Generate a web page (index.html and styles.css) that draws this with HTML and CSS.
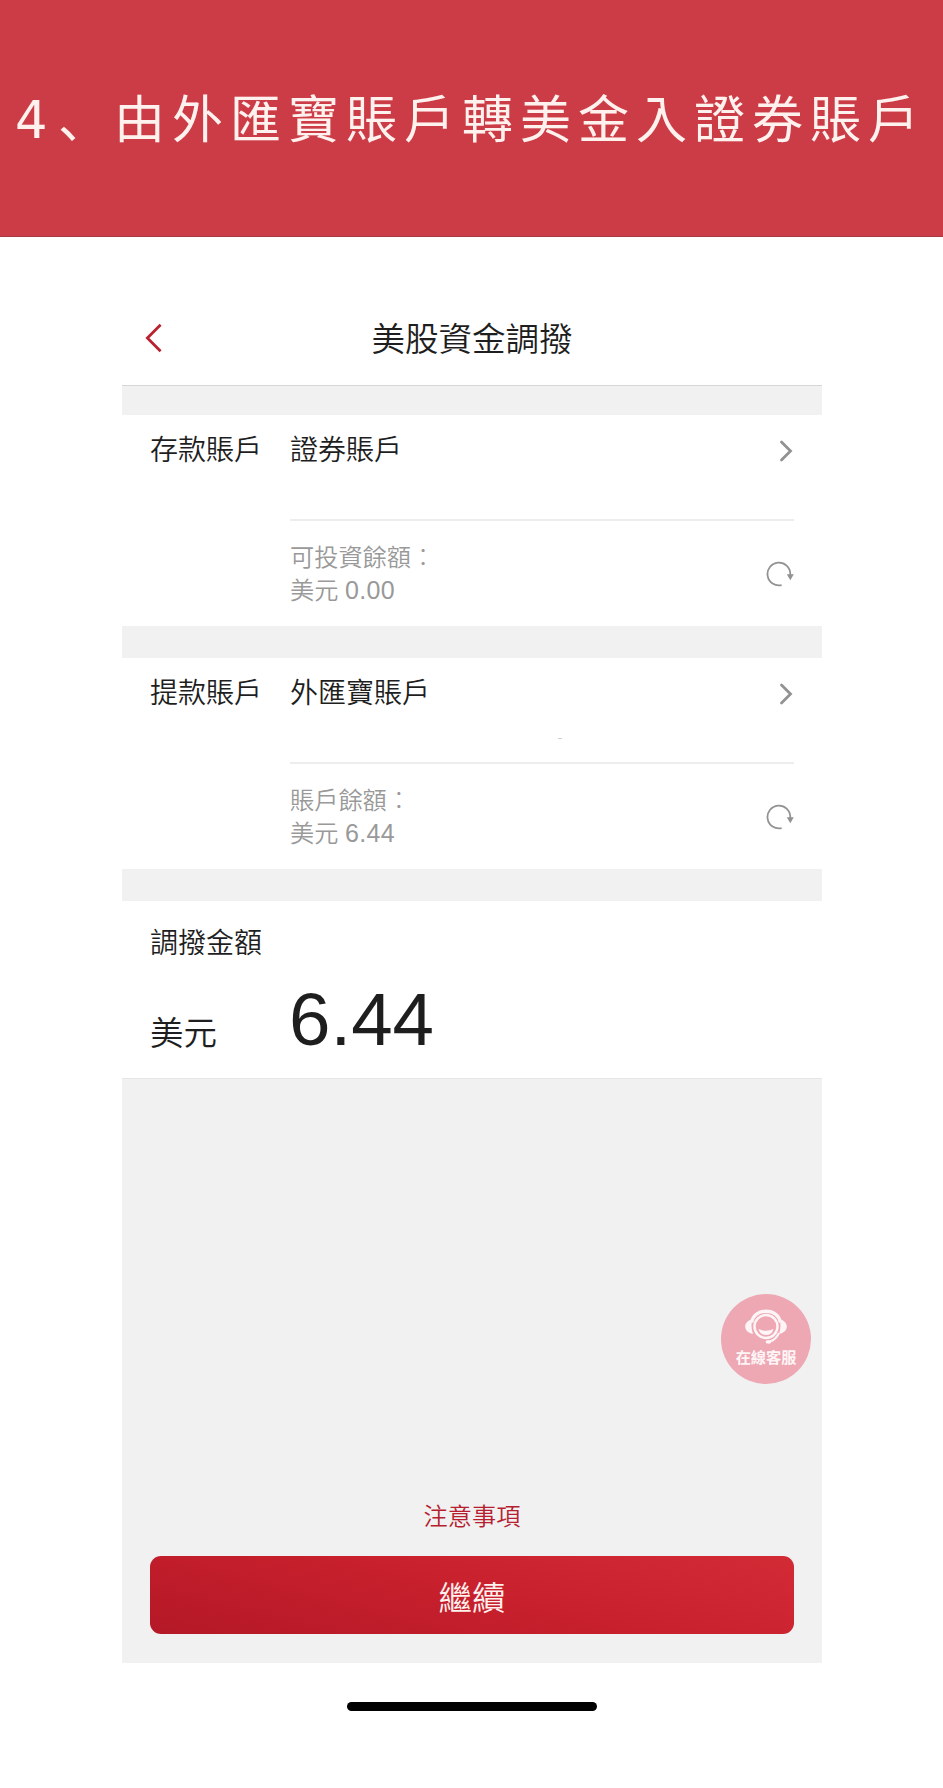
FILE: index.html
```html
<!DOCTYPE html>
<html lang="zh-Hant">
<head>
<meta charset="utf-8">
<title>美股資金調撥</title>
<link rel="stylesheet" href="styles.css">
</head>
<body>
<h1 class="banner"><span class="banner-num">4</span><span class="banner-comma" lang="ja">、</span><span class="banner-text">由外匯寶賬戶轉美金入證券賬戶</span></h1>
<main class="phone">
  <header class="navbar">
    <svg class="back" viewBox="0 0 17 30" width="17" height="30"><path d="M15.600 1.800 2.400 15l13.200 13.200" fill="none" stroke="#b9222f" stroke-width="2.800"/></svg>
    <h2 class="title">美股資金調撥</h2>
  </header>
  <div class="gap gap-top"></div>
  <section class="account">
    <div class="label">存款賬戶</div>
    <div class="detail">
      <div class="pick"><span>證券賬戶</span>
        <svg class="chevron" viewBox="0 0 14 22" width="14" height="22"><path d="M2.500 2 11.500 11l-9 9" fill="none" stroke="#929292" stroke-width="2.800" stroke-linecap="round"/></svg>
      </div>
      <div class="balance"><p>可投資餘額<span class="colon">：</span><br>美元 <span class="digits">0.00</span></p>
        <svg class="refresh" viewBox="0 0 28 26" width="28" height="26"><path d="M15.600 24.100A11.400 11.400 0 1 1 24.300 13v2" fill="none" stroke="#929292" stroke-width="1.800"/><path d="M20.800 13.200h7L24.300 19.200z" fill="#929292"/></svg>
      </div>
    </div>
  </section>
  <div class="gap"></div>
  <section class="account">
    <div class="label">提款賬戶</div>
    <div class="detail">
      <div class="pick"><span>外匯寶賬戶</span>
        <svg class="chevron" viewBox="0 0 14 22" width="14" height="22"><path d="M2.500 2 11.500 11l-9 9" fill="none" stroke="#929292" stroke-width="2.800" stroke-linecap="round"/></svg>
        <i class="tick"></i>
      </div>
      <div class="balance"><p>賬戶餘額<span class="colon">：</span><br>美元 <span class="digits">6.44</span></p>
        <svg class="refresh" viewBox="0 0 28 26" width="28" height="26"><path d="M15.600 24.100A11.400 11.400 0 1 1 24.300 13v2" fill="none" stroke="#929292" stroke-width="1.800"/><path d="M20.800 13.200h7L24.300 19.200z" fill="#929292"/></svg>
      </div>
    </div>
  </section>
  <div class="gap"></div>
  <section class="amount">
    <div class="amount-label">調撥金額</div>
    <div class="amount-row"><span class="currency">美元</span><span class="value">6.44</span></div>
  </section>
  <section class="footer">
    <button class="service">
      <svg viewBox="0 0 44 38" width="44" height="38">
        <path d="M7.500 15.500C9 8 15 4.200 22 4.200S35 8 36.500 15.500" fill="none" stroke="#fff5f6" stroke-width="3.400"/>
        <circle cx="22" cy="19.500" r="11.500" fill="none" stroke="#fff5f6" stroke-width="2.400"/>
        <path d="M8.500 12.500C4 13 1.200 16 1.200 19.500S4 26 9 27C7.200 22 7 17 8.500 12.500zM35.500 12.500c4.500.5 7.300 3.500 7.300 7s-2.800 6.500-7.800 7.500c1.800-5 2-10 .5-14.500z" fill="#fff5f6"/>
        <path d="M14.500 22q7.500 3.500 15 0-1.500 6-7.500 6t-7.500-6z" fill="#fff5f6"/>
        <path d="M35 26q-3 6.500-9 8.500" fill="none" stroke="#fff5f6" stroke-width="2"/>
        <ellipse cx="24.500" cy="34.800" rx="2.800" ry="1.900" fill="#fff5f6"/>
      </svg>
      <span>在線客服</span>
    </button>
    <a class="notice">注意事項</a>
    <button class="next">繼續</button>
  </section>
</main>
<div class="home"></div>
</body>
</html>
```
FILE: styles.css
```css
* { box-sizing: border-box; }
body {
  margin: 0;
  height: 1788px;
  background: #fff;
  color: #1e1e1e;
  font-family: "Liberation Sans", "Noto Sans CJK TC", sans-serif;
  font-weight: 350;
}
h1, h2, p { margin: 0; font-weight: inherit; }
button { border: 0; padding: 0; font: inherit; }
svg { display: block; flex: none; }
.banner {
  display: flex;
  height: 237px;
  padding: 78px 0 0 15px;
  background: #cc3c46;
  border-bottom: 1px solid #a93844;
  color: #fff1ee;
  font: 400 51px/76px "Noto Sans CJK TC", sans-serif;
  white-space: nowrap;
}
.banner-num { width: 43px; padding-top: 5px; font-family: "DejaVu Sans", sans-serif; }
.banner-comma { width: 56px; font-family: "Noto Sans CJK JP", sans-serif; }
.banner-text { letter-spacing: 7px; }
.phone { width: 700px; margin: 0 0 0 122px; }
.navbar {
  position: relative;
  display: flex;
  align-items: center;
  justify-content: center;
  height: 148px;
  padding-top: 58px;
}
.back { position: absolute; left: 23px; top: 86px; }
.title { font-size: 33.5px; line-height: 50px; }
.gap { height: 32px; background: #f1f1f1; }
.gap-top { height: 30px; border-top: 1px solid #d7d7d7; }
.account {
  display: flex;
  height: 211px;
  padding: 0 28px;
  font-size: 28px;
}
.label { width: 140px; padding-top: 16px; line-height: 40px; }
.detail { flex: 1; }
.pick {
  position: relative;
  display: flex;
  justify-content: space-between;
  height: 106px;
  padding-top: 16px;
  border-bottom: 2px solid #ededed;
  line-height: 40px;
}
.chevron { margin: 9px 1px 0 0; }
.tick {
  position: absolute;
  left: 268px;
  top: 80px;
  width: 4px;
  height: 1px;
  background: #ccc;
}
.balance {
  display: flex;
  justify-content: space-between;
  padding-top: 20px;
  color: #999;
  font-size: 24.2px;
  line-height: 33.2px;
}
.colon { font-weight: 300; }
.digits { font-size: 25px; letter-spacing: .3px; line-height: 1; }
.refresh { margin: 20px 0 0; }
.amount { height: 177px; padding: 23px 28px 0; }
.amount-label { font-size: 28px; line-height: 40px; }
.amount-row { display: flex; align-items: baseline; line-height: 86px; margin-top: 13px; }
.currency { width: 139px; font-size: 33.5px; }
.value { font-size: 74.500px; }
.footer {
  display: flex;
  flex-direction: column;
  height: 585px;
  padding: 215px 28px 0;
  background: #f1f1f1;
  border-top: 1px solid #e6e6e6;
}
.service {
  display: flex;
  flex-direction: column;
  align-items: center;
  align-self: flex-end;
  width: 90px;
  height: 90px;
  margin-right: -17px;
  padding-top: 13px;
  border-radius: 50%;
  background: #eda8b4;
  color: #fff5f6;
  font-size: 15.2px;
  font-weight: 700;
  line-height: 26px;
}
.notice {
  margin-top: 114px;
  color: #b51f30;
  font-size: 24.2px;
  line-height: 38px;
  text-align: center;
}
.next {
  height: 78px;
  margin-top: 20px;
  border-radius: 11px;
  background: linear-gradient(14deg, #b41826 0%, #c8202d 52%, #d32b36 100%);
  color: #fff1ee;
  font-size: 33.5px;
}
.home {
  width: 250px;
  height: 9px;
  margin: 39px 0 0 347px;
  border-radius: 5px;
  background: #000;
}
```
